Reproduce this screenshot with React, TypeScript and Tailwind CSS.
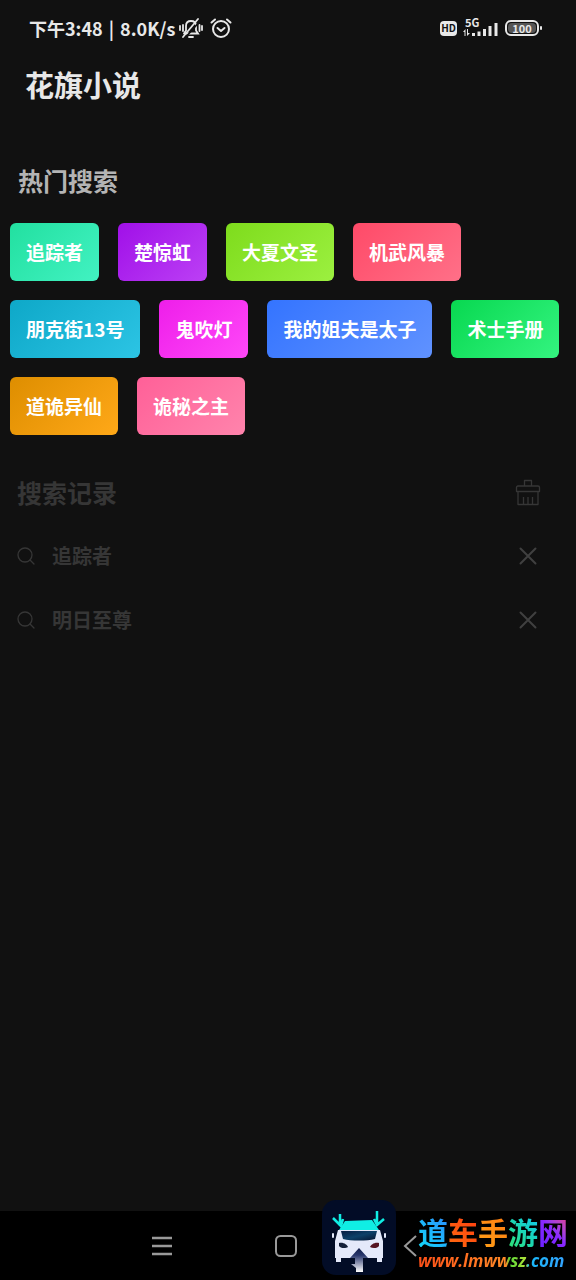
import { ReactNode } from "react"

const hotSearches = [
  { name: '追踪者', color: 'from-[#22e0a0] to-[#42f2c2]' },
  { name: '楚惊虹', color: 'from-[#a010e8] to-[#bc40f5]' },
  { name: '大夏文圣', color: 'from-[#7edc1c] to-[#9cf040]' },
  { name: '机武风暴', color: 'from-[#ff4a68] to-[#ff7088]' },
  { name: '朋克街13号', color: 'from-[#0ea8c8] to-[#2cc4e4]' },
  { name: '鬼吹灯', color: 'from-[#ee1eea] to-[#ff48f8]' },
  { name: '我的姐夫是太子', color: 'from-[#3474ff] to-[#6092ff]' },
  { name: '术士手册', color: 'from-[#08d850] to-[#34f480]' },
  { name: '道诡异仙', color: 'from-[#de8e00] to-[#ffa818]' },
  { name: '诡秘之主', color: 'from-[#ff6098] to-[#ff84ac]' },
]

const searchHistory = ['追踪者', '明日至尊']

const siteName = [
  { char: '道', color: 'from-[#2b8cff] to-[#14d8f8]' },
  { char: '车', color: 'from-[#ff3a10] to-[#ff6a10]' },
  { char: '手', color: 'from-[#ff7a10] to-[#ffa018]' },
  { char: '游', color: 'from-[#18c8f0] to-[#30e070]' },
  { char: '网', color: 'from-[#f03080] via-[#8a28ff] to-[#6a20ff]' },
]

function StatusBar() {
  return <div className="flex h-14 items-center justify-between pr-[34px] pl-[29px] text-[#e8e8e8]">
    <div className="flex items-center">
      <div className="flex gap-1.5 text-[18px] leading-6 font-bold">
        <span>下午3:48</span>
        <span>|</span>
        <span>8.0K/s</span>
      </div>
      <svg className="ml-1 h-6 w-6" viewBox="0 0 24 24" fill="none" stroke="currentColor" strokeWidth="1.8" strokeLinecap="round">
        <path d="M6 17.5h13l-2-3V10c0-3-2-5-5-5S7 7 7 10v4.500L5 17.500" />
        <path d="M10 21h4M1 10v4M4 9v6M20.500 9v6M23 10v4" />
        <path d="M6 22 22 4" stroke="#111" />
        <path d="M4 21 19 3" />
      </svg>
      <svg className="ml-1.5 h-6 w-6" viewBox="0 0 24 24" fill="none" stroke="currentColor" strokeWidth="2" strokeLinecap="round" strokeLinejoin="round">
        <circle cx="12" cy="13" r="8" />
        <path d="m8.500 12 3.500 3 3.500-3M2.500 6.500 6 3.500M21.500 6.500 18 3.500" />
      </svg>
    </div>
    <div className="flex items-center">
      <span className="flex h-[15px] w-[17px] items-center justify-center rounded bg-[#e8e8e8] text-[10px] leading-3 font-bold text-[#111]">HD</span>
      <div className="ml-1.5 flex h-6 w-9 flex-col">
        <span className="pl-0.5 text-[11px] leading-3 font-bold">5G</span>
        <svg className="-mt-2.5 h-[18px] w-9" viewBox="0 0 36 18" fill="currentColor">
          <path d="m0 14 2.500-3v7H1.500v-4zM4 11h1v4h2l-3 3zM9 15h3v3H9zM14.500 13.500h3V18h-3zM20 11h3v7h-3zM25.500 8h3v10h-3zM31.500 5h3v13h-3z" />
        </svg>
      </div>
      <span className="ml-1.5 flex h-4 w-[34px] items-center justify-center rounded-md border-2 border-[#e8e8e8] p-px">
        <span className="flex h-full w-full items-center justify-center rounded-sm bg-[#555] text-[11px] leading-3 font-bold">100</span>
      </span>
      <span className="ml-px h-1 w-0.5 rounded-full bg-[#e8e8e8]" />
    </div>
  </div>
}

function IconButton({ label, children }: { label: string; children: ReactNode }) {
  return <button type="button" aria-label={label} className="flex h-8 w-8 items-center justify-center">
    {children}
  </button>
}

function HotSearch() {
  return <section className="mt-[62px]">
    <h2 className="pl-[18px] text-[25px] leading-8 font-bold text-[#b4b4b4]">热门搜索</h2>
    <div className="mt-[27px] flex flex-wrap gap-[19px] pr-3 pl-2.5">
      {hotSearches.map(item => <button
        key={item.name}
        type="button"
        className={`h-[58px] rounded-md bg-linear-[135deg] px-4 text-[19px] leading-6 font-bold text-white ${item.color}`}
      >{item.name}</button>)}
    </div>
  </section>
}

function SearchHistory() {
  return <section className="mt-[41px] pr-8 pl-[17px] text-[#363636]">
    <div className="flex items-center justify-between">
      <h2 className="text-[25px] leading-8 font-bold">搜索记录</h2>
      <IconButton label="清空搜索记录">
        <svg className="h-7 w-7" viewBox="0 0 28 28" fill="none" stroke="currentColor" strokeWidth="1.3" strokeLinejoin="round">
          <path d="M10.500 8V2.500h7V8M2.500 9.500q0-1.500 1.500-1.500h20q1.500 0 1.500 1.500v4h-23zM4 13.500v13h20v-13M9.500 26.500V19M14 26.500V19M18.500 26.500V19" />
        </svg>
      </IconButton>
    </div>
    <ul className="mt-4">
      {searchHistory.map(item => <li key={item} className="flex h-16 items-center">
        <svg className="h-[18px] w-[18px]" viewBox="0 0 18 18" fill="none" stroke="currentColor" strokeWidth="1.3" strokeLinecap="round">
          <circle cx="8" cy="8" r="7" />
          <path d="m13 13 4 4" />
        </svg>
        <a href="#" className="ml-[17px] grow text-[20px] leading-7 font-bold">{item}</a>
        <IconButton label={`删除 ${item}`}>
          <svg className="h-[18px] w-[18px] text-[#404040]" viewBox="0 0 18 18" fill="none" stroke="currentColor" strokeWidth="2" strokeLinecap="round">
            <path d="m1.500 1.500 15 15M16.500 1.500l-15 15" />
          </svg>
        </IconButton>
      </li>)}
    </ul>
  </section>
}

function CarLogo() {
  return <svg className="h-[75px] w-[74px]" viewBox="0 0 74 75">
    <defs>
      <linearGradient id="arrow" x1="0" y1="0" x2="0" y2="1">
        <stop offset="0" stopColor="#101c48" />
        <stop offset="0.3" stopColor="#28366c" />
        <stop offset="1" stopColor="#ffffff" />
      </linearGradient>
      <linearGradient id="glass" x1="0" y1="0" x2="1" y2="1">
        <stop offset="0" stopColor="#071d42" />
        <stop offset="0.5" stopColor="#0c4068" />
        <stop offset="1" stopColor="#061430" />
      </linearGradient>
    </defs>
    <rect width="74" height="75" rx="14" fill="#020c26" />
    <path d="m23 21 27-1 7 10H17z" fill="#10eee4" />
    <path d="m16 30-3 11v17h1v4h5v-4h36v4h5v-4h1V41l-3-11z" fill="#e4e9fa" />
    <path d="M19 31h36l-2 8c-8 2-24 2-32 0z" fill="url(#glass)" />
    <path d="M11 34v3M63 34v3" stroke="#e4e9fa" strokeWidth="2" strokeLinecap="round" />
    <path d="M17 43c5-1 8 2 9 4-3 2-8 1-9-1z" fill="#142039" />
    <path d="M57 43c-5-1-8 2-9 4 3 2 8 1 9-1z" fill="#551421" />
    <path d="M18 14v12M11 18l8 8 2-7M55 11v14M62 19l-7 6-3-6" fill="none" stroke="#10eee4" strokeWidth="2.500" />
    <path d="m37 48 9 10h-5v14h-7v-4l-5-4h4v-6h-5z" fill="url(#arrow)" />
  </svg>
}

function NavBar() {
  return <nav className="relative h-[69px] bg-black text-[#999]">
    <div className="flex h-full items-center pl-[146px]">
      <IconButton label="最近任务">
        <svg className="h-[22px] w-[22px]" viewBox="0 0 22 22" stroke="currentColor" strokeWidth="2.500">
          <path d="M1 3h20M1 11h20M1 19h20" />
        </svg>
      </IconButton>
      <div className="ml-[92px]">
        <IconButton label="主屏幕">
          <svg className="h-[22px] w-[22px]" viewBox="0 0 22 22" fill="none" stroke="currentColor" strokeWidth="2">
            <rect x="1" y="1" width="20" height="20" rx="4.500" />
          </svg>
        </IconButton>
      </div>
      <div className="ml-[92px]">
        <IconButton label="返回">
          <svg className="h-[22px] w-[14px]" viewBox="0 0 14 22" fill="none" stroke="currentColor" strokeWidth="2">
            <path d="M13 1 2 11l11 10" />
          </svg>
        </IconButton>
      </div>
    </div>
    <div className="absolute right-1.5 bottom-[5px] flex items-end gap-[22px]">
      <CarLogo />
      <div className="w-[152px]">
        <div className="flex text-[30px] leading-8 font-bold">
          {siteName.map(item => <span key={item.char} className={`bg-linear-to-bl bg-clip-text text-transparent ${item.color}`}>{item.char}</span>)}
        </div>
        <div className="bg-[linear-gradient(90deg,#ff5018,#ff8a28_58%,#58d838_60%,#b0e038_71%,#18b8f8_73%,#38a0ff)] bg-clip-text font-['Open_Sans',sans-serif] text-[17px] leading-7 font-bold text-transparent italic">www.lmwwsz.com</div>
      </div>
    </div>
  </nav>
}

export default function App() {
  return <div className="flex min-h-screen flex-col bg-[#111] font-['Noto_Sans_CJK_SC',sans-serif]">
    <StatusBar />
    <main className="grow">
      <h1 className="mt-[10px] pl-[25px] text-[29px] leading-9 font-bold text-[#e8e8e8]">花旗小说</h1>
      <HotSearch />
      <SearchHistory />
    </main>
    <NavBar />
  </div>
}
